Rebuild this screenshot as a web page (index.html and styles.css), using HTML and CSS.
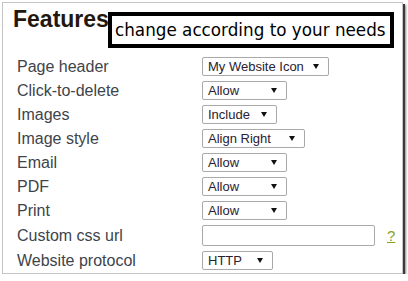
FILE: index.html
```html
<!DOCTYPE html>
<html lang="en">
<head>
    <meta charset="UTF-8">
    <title>Features</title>
    <link rel="stylesheet" href="styles.css">
</head>
<body>
    <div class="frame">
        <h2 class="features-title">Features</h2>

        <!-- annotation -->
        <div class="callout">change according to your needs</div>

        <div class="settings">
            <div class="setting-row">
                <div class="setting-label">Page header</div>
                <div class="fake-select" style="width: 127px">My Website Icon<svg class="arrow" width="6" height="5" viewBox="0 0 6 5"><path d="M0 0h6L3 5z"/></svg></div>
            </div>
            <div class="setting-row">
                <div class="setting-label">Click-to-delete</div>
                <div class="fake-select" style="width: 85px">Allow<svg class="arrow" width="6" height="5" viewBox="0 0 6 5"><path d="M0 0h6L3 5z"/></svg></div>
            </div>
            <div class="setting-row">
                <div class="setting-label">Images</div>
                <div class="fake-select" style="width: 75px">Include<svg class="arrow" width="6" height="5" viewBox="0 0 6 5"><path d="M0 0h6L3 5z"/></svg></div>
            </div>
            <div class="setting-row">
                <div class="setting-label">Image style</div>
                <div class="fake-select" style="width: 103px">Align Right<svg class="arrow" width="6" height="5" viewBox="0 0 6 5"><path d="M0 0h6L3 5z"/></svg></div>
            </div>
            <div class="setting-row">
                <div class="setting-label">Email</div>
                <div class="fake-select" style="width: 85px">Allow<svg class="arrow" width="6" height="5" viewBox="0 0 6 5"><path d="M0 0h6L3 5z"/></svg></div>
            </div>
            <div class="setting-row">
                <div class="setting-label">PDF</div>
                <div class="fake-select" style="width: 85px">Allow<svg class="arrow" width="6" height="5" viewBox="0 0 6 5"><path d="M0 0h6L3 5z"/></svg></div>
            </div>
            <div class="setting-row">
                <div class="setting-label">Print</div>
                <div class="fake-select" style="width: 85px">Allow<svg class="arrow" width="6" height="5" viewBox="0 0 6 5"><path d="M0 0h6L3 5z"/></svg></div>
            </div>
            <div class="setting-row tall">
                <div class="setting-label">Custom css url</div>
                <div class="url-field">
                    <div class="text-input"></div>
                    <a class="help-link" href="#">?</a>
                </div>
            </div>
            <div class="setting-row">
                <div class="setting-label">Website protocol</div>
                <div class="fake-select" style="width: 71px">HTTP<svg class="arrow" width="6" height="5" viewBox="0 0 6 5"><path d="M0 0h6L3 5z"/></svg></div>
            </div>
        </div>
    </div>
</body>
</html>
```

FILE: styles.css
```css
* {
    font-family: "Liberation Sans", Arial, sans-serif;
    box-sizing: border-box;
}

body {
    margin: 0;
    background: #fff;
}

.frame {
    position: relative;
    margin: 2px 0 0 2px;
    width: 401px;
    height: 272px;
    padding: 3px 0 0 14px;
    border: 1px solid #c4c4c4;
    background: #fff;
    box-shadow: 2px 2px 0 #3a3a3a, 3px 3px 2px #888;
}

.features-title {
    margin: 0 0 25px -4px;
    font-size: 23px;
    line-height: 26px;
    font-weight: bold;
    color: #24180e;
}

.callout {
    position: absolute;
    left: 105px;
    top: 9px;
    width: 286px;
    height: 36px;
    padding-left: 3px;
    border: 4px solid #000;
    background: #fff;
    font-family: "DejaVu Sans", sans-serif;
    font-size: 16.8px;
    line-height: 28px;
    color: #000;
    white-space: nowrap;
}

.settings {
    display: flex;
    flex-direction: column;
    gap: 5px;
}

.setting-row {
    display: grid;
    grid-template-columns: 185px auto;
    align-items: center;
    height: 19px;
}

.setting-row.tall {
    height: 21px;
}

.setting-label {
    font-size: 16px;
    line-height: 19px;
    color: #40444a;
}

.fake-select {
    display: flex;
    align-items: center;
    justify-content: space-between;
    height: 19px;
    padding: 0 9px 0 5px;
    border: 1px solid #a9a9a9;
    border-radius: 2px;
    background: #fff;
    font-size: 13px;
    color: #2a2230;
}

.arrow {
    fill: #111;
}

.url-field {
    display: flex;
    align-items: center;
    gap: 12px;
}

.text-input {
    width: 173px;
    height: 21px;
    border: 1px solid #a9a9a9;
    border-radius: 2px;
    background: #fff;
}

.help-link {
    font-size: 15px;
    color: #86a21c;
    text-decoration: underline;
}
```
